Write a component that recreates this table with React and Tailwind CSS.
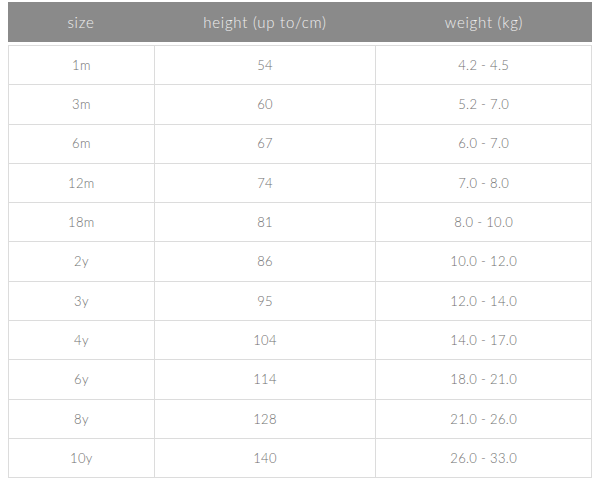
const rows = [
  ["1m", "54", "4.2 - 4.5"],
  ["3m", "60", "5.2 - 7.0"],
  ["6m", "67", "6.0 - 7.0"],
  ["12m", "74", "7.0 - 8.0"],
  ["18m", "81", "8.0 - 10.0"],
  ["2y", "86", "10.0 - 12.0"],
  ["3y", "95", "12.0 - 14.0"],
  ["4y", "104", "14.0 - 17.0"],
  ["6y", "114", "18.0 - 21.0"],
  ["8y", "128", "21.0 - 26.0"],
  ["10y", "140", "26.0 - 33.0"],
];

export default function App() {
  return (
    <div className="w-[600px] h-[480px] bg-white pt-[2px] px-[8px] font-['Lato',sans-serif] font-light">
      <div className="grid grid-cols-[146px_222px_216px] h-[40px] bg-[#8a8a8a] text-[#f0f0f0] text-[15px] tracking-wider items-center text-center">
        <div>size</div>
        <div>height (up to/cm)</div>
        <div>weight (kg)</div>
      </div>
      <table className="mt-[3px] w-[584px] border-collapse text-[13px] text-[#707070] tracking-wide text-center">
        <colgroup>
          <col className="w-[146px]" />
          <col className="w-[222px]" />
          <col className="w-[216px]" />
        </colgroup>
        <tbody>
          {rows.map((r) => (
            <tr key={r[0]} className="h-[39.3px]">
              {r.map((c, i) => (
                <td key={i} className="border border-[#dcdcdc] p-0 pt-[1px]">
                  {c}
                </td>
              ))}
            </tr>
          ))}
        </tbody>
      </table>
    </div>
  );
}
